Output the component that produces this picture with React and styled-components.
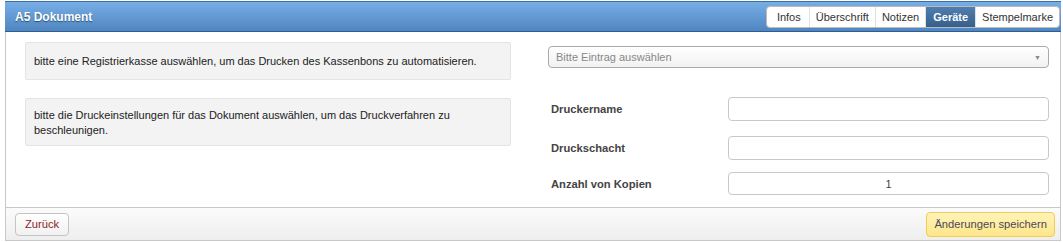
import React from 'react';
import styled, { createGlobalStyle } from 'styled-components';

const GlobalStyle = createGlobalStyle`
  html, body {
    margin: 0;
    padding: 0;
    background: #fff;
  }
  body {
    font-family: "Liberation Sans", Arial, sans-serif;
    font-size: 12px;
    color: #333;
  }
`;

const Panel = styled.div`
  margin: 1px 2px 0 5px;
  border: 1px solid #c8c8c8;
  border-top: none;
  height: 240px;
  box-sizing: border-box;
  display: flex;
  flex-direction: column;
`;

const Header = styled.div`
  height: 31px;
  box-sizing: border-box;
  margin: 0 -1px;
  background: linear-gradient(#77aee6, #4f86c1);
  border-top: 1px solid #3b6ea5;
  border-bottom: 1px solid #2f5d8e;
  display: flex;
  align-items: center;
  justify-content: space-between;
  padding-left: 10px;
`;

const Title = styled.div`
  color: #fff;
  font-weight: bold;
  font-size: 12px;
  text-shadow: 0 1px 1px #2c4f78;
`;

const Tabs = styled.div`
  display: flex;
  height: 20px;
  background: #fff;
  border: 1px solid #bbb;
  border-radius: 4px;
  overflow: hidden;
  margin-right: 1px;
`;

const Tab = styled.div`
  display: flex;
  align-items: center;
  padding: 0 ${({ $active }) => ($active ? 7 : 6)}px;
  font-size: 11px;
  color: ${({ $active }) => ($active ? '#fff' : '#333')};
  background: ${({ $active }) => ($active ? 'linear-gradient(#4f7fb0, #365f8c)' : 'transparent')};
  font-weight: ${({ $active }) => ($active ? 'bold' : 'normal')};
  border-left: ${({ $first }) => ($first ? 'none' : '1px solid #e2e2e2')};
  &:first-child {
    padding-left: 10px;
    padding-right: 8px;
  }
`;

const Body = styled.div`
  flex: 1;
  display: grid;
  grid-template-columns: 486px 1fr;
  column-gap: 37px;
  padding: 10px 11px 0 19px;
`;

const LeftCol = styled.div`
  display: flex;
  flex-direction: column;
  gap: 18px;
`;

const Info = styled.div`
  background: #f3f3f3;
  border: 1px solid #e4e4e4;
  border-radius: 2px;
  padding: ${({ $tall }) => ($tall ? '9px 8px 7px' : '11px 8px 10px')};
  line-height: 15px;
  font-size: 11px;
  color: #222;
  min-height: ${({ $tall }) => ($tall ? 45 : 37)}px;
  box-sizing: border-box;
`;

const RightCol = styled.div`
  display: flex;
  flex-direction: column;
  padding-top: 4px;
`;

const Select = styled.div`
  height: 22px;
  box-sizing: border-box;
  border: 1px solid #aaa;
  border-radius: 4px;
  background: linear-gradient(#fff, #f1f1f1);
  display: flex;
  align-items: center;
  justify-content: space-between;
  padding: 0 7px 0 7px;
  color: #888;
  font-size: 11px;
  margin-bottom: 29px;
`;

const Caret = styled.span`
  font-size: 7px;
  color: #888;
`;

const Row = styled.div`
  display: grid;
  grid-template-columns: 180px 1fr;
  align-items: center;
  margin-bottom: ${({ $mb }) => $mb}px;
`;

const Label = styled.div`
  font-weight: bold;
  color: #444;
  font-size: 11.2px;
  padding-left: 3px;
`;

const Input = styled.div`
  height: ${({ $h }) => $h || 24}px;
  box-sizing: border-box;
  border: 1px solid #c8c8c8;
  border-radius: 4px;
  background: #fff;
  display: flex;
  align-items: center;
  justify-content: center;
  font-size: 11px;
  color: #444;
`;

const Footer = styled.div`
  height: 33px;
  box-sizing: border-box;
  border-top: 1px solid #c8c8c8;
  background: linear-gradient(#fbfbfb, #eeeeee);
  display: flex;
  align-items: center;
  justify-content: space-between;
  padding: 0 5px 0 9px;
`;

const Button = styled.div`
  height: ${({ $primary }) => ($primary ? 25 : 23)}px;
  box-sizing: border-box;
  display: flex;
  align-items: center;
  padding: 0 ${({ $primary }) => ($primary ? 7 : 9)}px;
  border-radius: 4px;
  font-size: 11.2px;
  border: 1px solid ${({ $primary }) => ($primary ? '#f0cc55' : '#c4c4c4')};
  background: ${({ $primary }) => ($primary ? 'linear-gradient(#fff3b8, #fde68a)' : 'linear-gradient(#fff, #f1f1f1)')};
  color: ${({ $primary }) => ($primary ? '#4a4a5a' : '#8a1f2b')};
`;

export default function App() {
  return (
    <>
      <GlobalStyle />
      <Panel>
        <Header>
          <Title>A5 Dokument</Title>
          <Tabs>
            <Tab $first>Infos</Tab>
            <Tab>Überschrift</Tab>
            <Tab>Notizen</Tab>
            <Tab $active>Geräte</Tab>
            <Tab>Stempelmarke</Tab>
          </Tabs>
        </Header>
        <Body>
          <LeftCol>
            <Info>bitte eine Registrierkasse auswählen, um das Drucken des Kassenbons zu automatisieren.</Info>
            <Info $tall>
              bitte die Druckeinstellungen für das Dokument auswählen, um das Druckverfahren zu
              <br />
              beschleunigen.
            </Info>
          </LeftCol>
          <RightCol>
            <Select>
              <span>Bitte Eintrag auswählen</span>
              <Caret>▼</Caret>
            </Select>
            <Row $mb={15}>
              <Label>Druckername</Label>
              <Input />
            </Row>
            <Row $mb={12}>
              <Label>Druckschacht</Label>
              <Input />
            </Row>
            <Row $mb={0}>
              <Label>Anzahl von Kopien</Label>
              <Input $h={23}>1</Input>
            </Row>
          </RightCol>
        </Body>
        <Footer>
          <Button>Zurück</Button>
          <Button $primary>Änderungen speichern</Button>
        </Footer>
      </Panel>
    </>
  );
}
